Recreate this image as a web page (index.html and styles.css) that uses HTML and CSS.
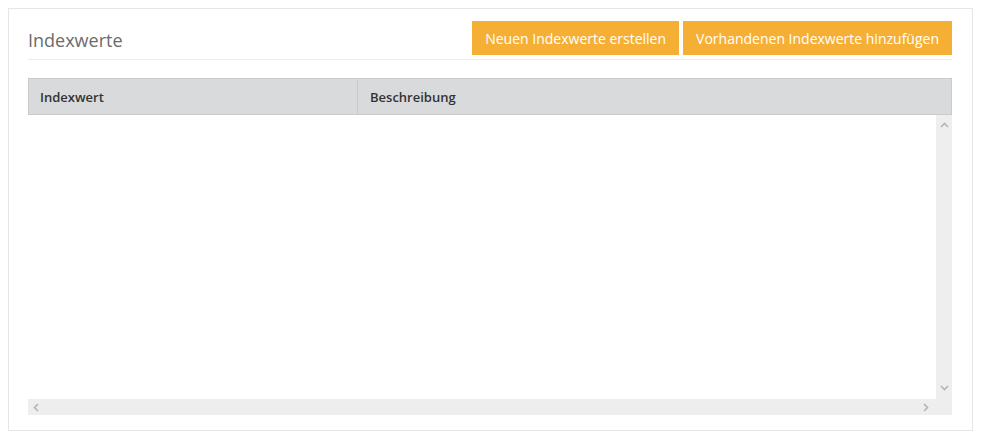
FILE: index.html
```html
<!DOCTYPE html>
<html lang="de">
<head>
<meta charset="utf-8">
<title>Indexwerte</title>
<link rel="stylesheet" href="styles.css">
</head>
<body>
<div class="panel">
  <div class="panel-head">
    <h2 class="title">Indexwerte</h2>
    <div class="actions">
      <button class="btn">Neuen Indexwerte erstellen</button>
      <button class="btn">Vorhandenen Indexwerte hinzufügen</button>
    </div>
  </div>
  <div class="grid">
    <div class="grid-head">
      <div class="col col-1">Indexwert</div>
      <div class="col col-2">Beschreibung</div>
    </div>
    <div class="grid-body">
      <div class="viewport">
        <div class="content"></div>
        <div class="vscroll">
          <svg class="arrow" width="9" height="6" viewBox="0 0 9 6"><path d="M1 5 L4.5 1.5 L8 5" fill="none" stroke="#b4b4b4" stroke-width="1.6"/></svg>
          <svg class="arrow" width="9" height="6" viewBox="0 0 9 6"><path d="M1 1 L4.5 4.5 L8 1" fill="none" stroke="#b4b4b4" stroke-width="1.6"/></svg>
        </div>
      </div>
      <div class="hrow">
        <div class="hscroll">
          <svg class="arrow" width="6" height="9" viewBox="0 0 6 9"><path d="M5 1 L1.5 4.5 L5 8" fill="none" stroke="#b4b4b4" stroke-width="1.6"/></svg>
          <svg class="arrow" width="6" height="9" viewBox="0 0 6 9"><path d="M1 1 L4.5 4.5 L1 8" fill="none" stroke="#b4b4b4" stroke-width="1.6"/></svg>
        </div>
        <div class="corner"></div>
      </div>
    </div>
  </div>
</div>
</body>
</html>
```
FILE: styles.css
```css
html, body {
  margin: 0;
  padding: 0;
  background: #ffffff;
}
body {
  font-family: "Open Sans", "Liberation Sans", sans-serif;
  padding: 8px 10px 0 8px;
}
.panel {
  border: 1px solid #e3e7ea;
  padding: 12px 20px 15px 19px;
  height: 423px;
  box-sizing: border-box;
  display: flex;
  flex-direction: column;
}
.panel-head {
  display: flex;
  justify-content: space-between;
  align-items: flex-start;
  border-bottom: 1px solid #eceeef;
  padding-bottom: 4px;
}
.title {
  margin: 5px 0 0 0;
  font-size: 18px;
  font-weight: 400;
  color: #6b6b6b;
  line-height: 28px;
}
.actions {
  display: flex;
  gap: 4px;
}
.btn {
  background: #f6af35;
  color: #ffffff;
  border: none;
  font-family: "Open Sans", "Liberation Sans", sans-serif;
  font-size: 14px;
  height: 34px;
  padding: 0 13px;
  cursor: pointer;
}
.grid {
  margin-top: 18px;
  flex: 1;
  display: flex;
  flex-direction: column;
}
.grid-head {
  display: flex;
  background: #d9dadc;
  border: 1px solid #c9cacc;
  height: 37px;
  box-sizing: border-box;
}
.col {
  font-size: 13px;
  font-weight: 600;
  color: #333333;
  display: flex;
  align-items: center;
}
.col-1 {
  width: 317px;
  padding-left: 11px;
  border-right: 1px solid #c9cacc;
}
.col-2 {
  flex: 1;
  padding-left: 12px;
}
.grid-body {
  flex: 1;
  display: flex;
  flex-direction: column;
}
.viewport {
  flex: 1;
  display: flex;
}
.content {
  flex: 1;
}
.vscroll {
  width: 16px;
  background: #eeeeee;
  display: flex;
  flex-direction: column;
  justify-content: space-between;
  align-items: center;
  padding: 7px 0 8px;
}
.hrow {
  display: flex;
  height: 16px;
}
.hscroll {
  flex: 1;
  background: #eeeeee;
  display: flex;
  justify-content: space-between;
  align-items: center;
  padding: 0 7px 0 5px;
}
.corner {
  width: 16px;
  background: #eeeeee;
}
.arrow {
  display: block;
}
```
